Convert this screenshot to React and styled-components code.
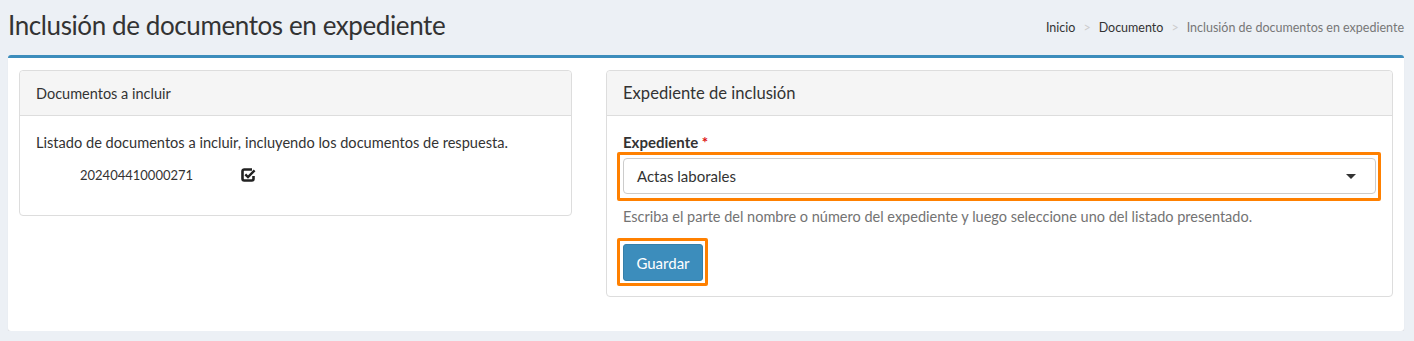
import React from "react";
import styled, { createGlobalStyle } from "styled-components";

const GlobalStyle = createGlobalStyle`
	body {
		margin: 0;
		background: #ecf0f5;
		font-family: "Lato", "Liberation Sans", sans-serif;
		color: #333;
	}
`;

const Page = styled.div`
	padding: 0 10px 0 8px;
`;

const ContentHeader = styled.div`
	display: flex;
	align-items: center;
	justify-content: space-between;
	height: 55px;
	padding-bottom: 6px;
	box-sizing: border-box;
`;

const Title = styled.h1`
	margin: 0;
	font-size: 26px;
	font-weight: 400;
	color: #333;
	letter-spacing: -0.4px;
`;

const Breadcrumb = styled.ol`
	display: flex;
	list-style: none;
	margin: 5px 0 0;
	padding: 0;
	font-size: 12.5px;
`;

const Crumb = styled.li`
	color: ${(p) => (p.active ? "#777" : "#333")};

	&:not(:first-child)::before {
		content: ">";
		color: #ccc;
		padding: 0 8px;
	}
`;

const Box = styled.div`
	background: #fff;
	border-top: 3px solid #3c8dbc;
	border-radius: 3px;
	box-shadow: 0 1px 1px rgba(0, 0, 0, 0.1);
	padding: 12px 11px 34px;
	display: grid;
	grid-template-columns: 553px 1fr;
	gap: 34px;
	align-items: start;
`;

const Card = styled.div`
	border: 1px solid #ddd;
	border-radius: 4px;
	background: #fff;
`;

const CardHeader = styled.div`
	background: #f5f5f5;
	border-bottom: 1px solid #ddd;
	height: 44px;
	padding: 0 16px;
	display: flex;
	align-items: center;
	font-size: ${(p) => p.size || 14.5}px;
	border-radius: 4px 4px 0 0;
`;

const CardBody = styled.div`
	padding: ${(p) => p.pad || "16px"};
`;

const Text = styled.p`
	margin: 0;
	font-size: 14.6px;
`;

const DocRow = styled.div`
	display: flex;
	align-items: center;
	padding: 14px 0 0 44px;
	font-size: 13px;
	height: 20px;
	gap: 48px;
`;

const Label = styled.label`
	display: block;
	font-weight: 700;
	font-size: 15px;
	margin-bottom: 1px;

	span {
		color: #dd1111;
	}
`;

const Highlight = styled.div`
	border: 3px solid #ff8000;
	border-radius: 2px;
	padding: 3px 2px 4px 3px;
	margin: 0 -5px 0 -6px;
	width: ${(p) => (p.fit ? "fit-content" : "auto")};
	${(p) => p.fit && "padding-bottom: 2px;"}
`;

const Select = styled.div`
	height: 36px;
	border: 1px solid #ccc;
	border-radius: 4px;
	display: flex;
	align-items: center;
	justify-content: space-between;
	padding: 0 19px 0 13px;
	font-size: 15px;
	box-sizing: border-box;
`;

const Caret = styled.span`
	width: 0;
	height: 0;
	border-left: 5px solid transparent;
	border-right: 5px solid transparent;
	border-top: 5px solid #333;
`;

const Help = styled.p`
	margin: 7px 0 13px;
	font-size: 14.5px;
	color: #737373;
`;

const Button = styled.button`
	background: #3c8dbc;
	border: 1px solid #367fa9;
	border-radius: 3px;
	color: #fff;
	font-family: inherit;
	font-size: 15px;
	width: 80px;
	height: 37px;
	display: block;
`;

function CheckSquare() {
	return (
		<svg width="15" height="14" viewBox="0 0 15 14">
			<path
				d="M11 1.5H3.2A1.7 1.7 0 0 0 1.5 3.2v7.6a1.7 1.7 0 0 0 1.7 1.7h7.6a1.7 1.7 0 0 0 1.7-1.7V8"
				fill="none"
				stroke="#222"
				strokeWidth="2.6"
			/>
			<path d="M4.3 6.3l2.7 2.7 6.6-6.6" fill="none" stroke="#222" strokeWidth="2.4" />
		</svg>
	);
}

export default function App() {
	return (
		<>
			<GlobalStyle />
			<Page>
				<ContentHeader>
					<Title>Inclusión de documentos en expediente</Title>
					<Breadcrumb>
						<Crumb>Inicio</Crumb>
						<Crumb>Documento</Crumb>
						<Crumb active>Inclusión de documentos en expediente</Crumb>
					</Breadcrumb>
				</ContentHeader>
				<Box>
					<Card>
						<CardHeader>Documentos a incluir</CardHeader>
						<CardBody pad="18px 16px 30px">
							<Text>Listado de documentos a incluir, incluyendo los documentos de respuesta.</Text>
							<DocRow>
								<span>202404410000271</span>
								<CheckSquare />
							</DocRow>
						</CardBody>
					</Card>
					<Card>
						<CardHeader size={16.6}>Expediente de inclusión</CardHeader>
						<CardBody pad="17px 16px 10px">
							<Label>
								Expediente <span>*</span>
							</Label>
							<Highlight>
								<Select>
									Actas laborales
									<Caret />
								</Select>
							</Highlight>
							<Help>
								Escriba el parte del nombre o número del expediente y luego seleccione uno del listado presentado.
							</Help>
							<Highlight fit>
								<Button>Guardar</Button>
							</Highlight>
						</CardBody>
					</Card>
				</Box>
			</Page>
		</>
	);
}
